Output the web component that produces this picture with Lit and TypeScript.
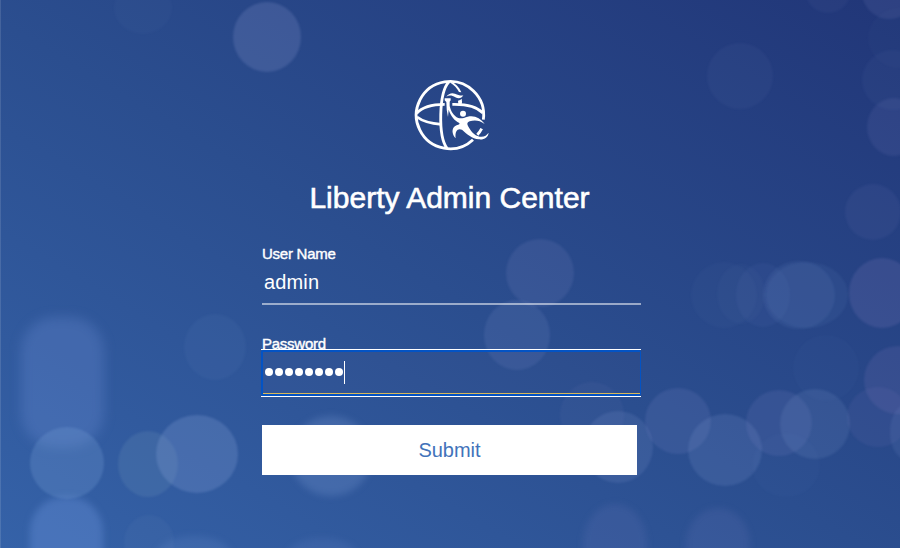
import { LitElement, html, css, svg } from "lit";
import { customElement } from "lit/decorators.js";

interface Bokeh {
  x: number;
  y: number;
  rx: number;
  ry: number;
  fill: string;
  alpha: number;
  soft?: boolean;
}

const LIGHTS: Bokeh[] = [
  { x: 267, y: 37, rx: 34, ry: 35, fill: "#8f9ad0", alpha: 0.22 },
  { x: 143, y: 8, rx: 29, ry: 26, fill: "#8090c8", alpha: 0.04 },
  { x: 740, y: 76, rx: 33, ry: 33, fill: "#8f9ad0", alpha: 0.06 },
  { x: 828, y: -10, rx: 23, ry: 23, fill: "#8f9ad0", alpha: 0.06 },
  { x: 889, y: -8, rx: 27, ry: 27, fill: "#8f96ce", alpha: 0.12 },
  { x: 900, y: 38, rx: 32, ry: 30, fill: "#8f96ce", alpha: 0.03 },
  { x: 893, y: 80, rx: 31, ry: 30, fill: "#8f96ce", alpha: 0.05 },
  { x: 894, y: 127, rx: 27, ry: 29, fill: "#8f96ce", alpha: 0.11 },
  { x: 873, y: 212, rx: 28, ry: 28, fill: "#8f90ce", alpha: 0.08 },
  { x: 882, y: 293, rx: 33, ry: 35, fill: "#9488cc", alpha: 0.17 },
  { x: 898, y: 380, rx: 34, ry: 34, fill: "#9080c4", alpha: 0.15 },
  { x: 878, y: 417, rx: 31, ry: 30, fill: "#8880c4", alpha: 0.1 },
  { x: 907, y: 432, rx: 17, ry: 28, fill: "#80a0d8", alpha: 0.12 },
  { x: 724, y: 295, rx: 33, ry: 33, fill: "#80a0d8", alpha: 0.04 },
  { x: 741, y: 294, rx: 24, ry: 30, fill: "#80a0d8", alpha: 0.04 },
  { x: 763, y: 295, rx: 27, ry: 32, fill: "#80a0d8", alpha: 0.06 },
  { x: 799, y: 295, rx: 36, ry: 34, fill: "#80a0d8", alpha: 0.1 },
  { x: 807, y: 295, rx: 41, ry: 33, fill: "#80a0d8", alpha: 0.08 },
  { x: 540, y: 273, rx: 34, ry: 34, fill: "#9098d0", alpha: 0.14 },
  { x: 517, y: 335, rx: 33, ry: 35, fill: "#90a0d8", alpha: 0.13 },
  { x: 592, y: 415, rx: 32, ry: 33, fill: "#9088cc", alpha: 0.07 },
  { x: 618, y: 447, rx: 35, ry: 36, fill: "#90a0d8", alpha: 0.15 },
  { x: 678, y: 421, rx: 33, ry: 33, fill: "#9098d4", alpha: 0.14 },
  { x: 725, y: 450, rx: 37, ry: 36, fill: "#86a2d8", alpha: 0.16 },
  { x: 779, y: 423, rx: 33, ry: 33, fill: "#9098d4", alpha: 0.12 },
  { x: 815, y: 424, rx: 35, ry: 35, fill: "#88a0d8", alpha: 0.14 },
  { x: 826, y: 368, rx: 33, ry: 33, fill: "#80a0d8", alpha: 0.03 },
  { x: 786, y: 465, rx: 34, ry: 32, fill: "#80a0d8", alpha: 0.03 },
  { x: 215, y: 347, rx: 31, ry: 33, fill: "#90a8d8", alpha: 0.06 },
  { x: 148, y: 464, rx: 30, ry: 33, fill: "#90b0c8", alpha: 0.14 },
  { x: 197, y: 454, rx: 41, ry: 39, fill: "#88a4d8", alpha: 0.26 },
  { x: 67, y: 463, rx: 37, ry: 36, fill: "#78a0d8", alpha: 0.27 },
  { x: 331, y: 456, rx: 41, ry: 40, fill: "#80a0d8", alpha: 0.25, soft: true },
  { x: 149, y: 542, rx: 25, ry: 27, fill: "#80a0c0", alpha: 0.07 },
  { x: 194, y: 556, rx: 38, ry: 20, fill: "#80a0e0", alpha: 0.15, soft: true },
  { x: 322, y: 556, rx: 35, ry: 18, fill: "#80a0e0", alpha: 0.12, soft: true },
  { x: 615, y: 544, rx: 32, ry: 40, fill: "#8c88cc", alpha: 0.12, soft: true },
  { x: 718, y: 544, rx: 32, ry: 36, fill: "#8c88cc", alpha: 0.12, soft: true },
];

@customElement("app-bokeh")
export class AppBokeh extends LitElement {
  static styles = css`
    :host, svg { display: block; }
    .crisp { filter: blur(1px); }
    .soft { filter: blur(3.5px); }
    .column { filter: blur(6px); }
  `;

  render() {
    return html`<svg width="900" height="548" viewBox="0 0 900 548" aria-hidden="true">
      <rect class="column" x="21" y="317" width="83" height="130" rx="34" fill="#7898e0" fill-opacity=".25" />
      <rect class="soft" x="30" y="497" width="73" height="100" rx="34" fill="#78a0e8" fill-opacity=".3" />
      ${LIGHTS.map(
        (l) => svg`<ellipse class=${l.soft ? "soft" : "crisp"} cx=${l.x} cy=${l.y} rx=${l.rx} ry=${l.ry}
          fill=${l.fill} fill-opacity=${l.alpha} />`
      )}
      <rect width="1" height="548" fill="#fff" fill-opacity=".12" />
    </svg>`;
  }
}

@customElement("app-logo")
export class AppLogo extends LitElement {
  static styles = css`
    :host, svg { display: block; }
    .line { fill: none; stroke: #fff; stroke-width: 8.5; }
    .solid { fill: #fff; }
  `;

  render() {
    return html`<svg width="95" height="90" viewBox="0 0 285 270" role="img" aria-label="Liberty">
      <path class="line" d="M235 149A101 101 0 1 0 204 209" />
      <path class="line" d="M230 176Q225 186 217 194" />
      <path class="line" d="M132 35C101 67 99 199 126 235" />
      <path class="line" d="M35 130C56 106 90 103 119 103" />
      <path class="line" d="M36 141C58 158 84 161 109 163" />
      <path class="line" d="M142 103C182 102 216 110 234 129" />
      <path class="solid" d="M137 35C152 40 163 51 169 67L162 66C156 55 147 45 137 39Z" />
      <path class="solid" d="M124 80C130 71 140 67 150 71C160 75 167 78 175 76C170 85 161 87 151 82C141 76 133 75 124 80Z" />
      <path class="solid" d="M159 92Q166 91 170 86Q172 95 170 103H160Z" />
      <path class="solid" d="M119 85H137V91L134 95L134 108C138 125 146 138 160 144C168 147 178 143 188 140C208 135 226 144 239 162C224 151 209 149 194 154C187 157 185 161 189 168C197 183 207 196 224 200C237 202 245 196 251 188C249 203 237 210 221 208C201 206 187 193 171 179C159 174 149 181 152 205C140 192 139 174 152 167C160 163 165 165 163 159C148 152 137 137 131 119L129 141Q124 122 124 96L119 91Z" />
      <circle class="solid" cx="174" cy="131" r="9" />
    </svg>`;
  }
}

@customElement("app-root")
export class AppRoot extends LitElement {
  static styles = css`
    :host {
      display: block;
      position: relative;
      width: 900px;
      height: 548px;
      overflow: hidden;
      color: #fff;
      font-family: "Liberation Sans", Arial, sans-serif;
      background: linear-gradient(to top right, #3562a8 0%, #2b4e8f 48%, #213678 100%);
    }
    .backdrop { position: absolute; inset: 0; }
    .login {
      position: relative;
      display: flex;
      flex-direction: column;
      width: 380px;
      margin-left: 261px;
      padding-top: 70px;
    }
    .logo { margin-left: 144px; }
    h1 {
      margin: 20px 0 0;
      height: 35px;
      width: 377px;
      font-size: 30px;
      line-height: 36px;
      font-weight: 400;
      text-align: center;
      white-space: nowrap;
      -webkit-text-stroke: 0.6px #fff;
    }
    .label {
      height: 18px;
      margin-left: 1px;
      font-size: 15px;
      line-height: 18px;
      letter-spacing: -0.25px;
      -webkit-text-stroke: 0.4px #fff;
    }
    .user { margin-top: 30px; }
    .pass { margin-top: 30px; }
    .field {
      box-sizing: border-box;
      display: flex;
      align-items: center;
    }
    .name {
      height: 42px;
      margin-left: 1px;
      padding: 0 2px 1px;
      border-bottom: 2px solid rgba(255, 255, 255, 0.53);
      font-size: 20px;
      letter-spacing: 0.15px;
    }
    .secret {
      height: 48px;
      margin-top: -4px;
      border-top: 1px solid #fff;
      border-bottom: 1px solid #fff;
    }
    .ring {
      box-sizing: border-box;
      display: flex;
      align-items: flex-start;
      width: 380px;
      height: 46px;
      padding: 9px 0 0 1px;
      border: 2px solid #0353c4;
      border-right-width: 1px;
      border-radius: 2px;
      background: linear-gradient(#d9b758, #d9b758) bottom / 100% 1px no-repeat rgba(90, 80, 130, 0.06);
    }
    .dots { display: flex; gap: 2px; padding: 7px 0 0 1px; }
    .dot { width: 8px; height: 8px; border-radius: 50%; background: #fff; }
    .caret { width: 1px; height: 23px; margin-left: 1px; background: #fff; }
    button {
      width: 375px;
      height: 50px;
      margin: 28px 0 0 1px;
      padding: 0;
      border: 0;
      background: #fff;
      color: #4273ba;
      font-family: "Liberation Sans", Arial, sans-serif;
      font-size: 20px;
      line-height: 50px;
    }
  `;

  render() {
    return html`
      <app-bokeh class="backdrop"></app-bokeh>
      <main class="login">
        <app-logo class="logo"></app-logo>
        <h1>Liberty Admin Center</h1>
        <div class="label user">User Name</div>
        <div class="field name">admin</div>
        <div class="label pass">Password</div>
        <div class="field secret">
          <div class="ring">
            <div class="dots">${Array.from({ length: 8 }, () => html`<span class="dot"></span>`)}</div>
            <span class="caret"></span>
          </div>
        </div>
        <button>Submit</button>
      </main>
    `;
  }
}
